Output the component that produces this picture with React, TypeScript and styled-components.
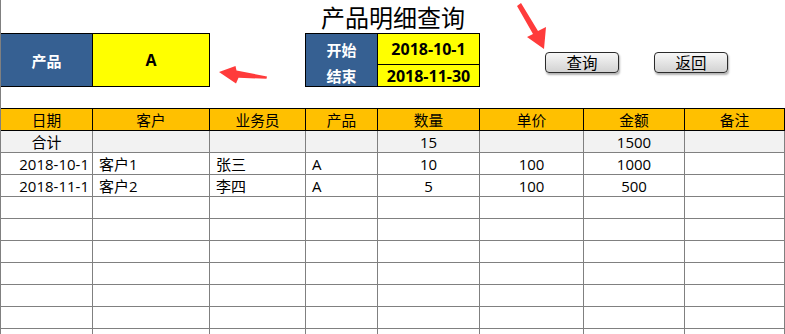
// Product Detail Query

// ___________________________________________________________________

import * as React from 'react'
import styled, { createGlobalStyle } from 'styled-components'

// ___________________________________________________________________

const colors = {
  blue: '#366092',
  yellow: '#ffff00',
  header: '#ffc000',
  total: '#f2f2f2',
  grid: '#808080',
  line: '#000000',
  arrow: '#ff3b3b'
}

const columns = '92px 117px 96px 72px 102px 104px 101px 100px'
const cjk = '"Noto Sans CJK SC", "Open Sans", sans-serif'
const mixed = '"Open Sans", "Noto Sans CJK SC", sans-serif'

type Align = 'left' | 'center' | 'right'

type RowShape = {
  date: string
  customer: string
  seller: string
  product: string
  qty: string
  price: string
  amount: string
  note: string
}

const headers = ['日期', '客户', '业务员', '产品', '数量', '单价', '金额', '备注']

const rows: RowShape[] = [
  {
    date: '2018-10-1',
    customer: '客户1',
    seller: '张三',
    product: 'A',
    qty: '10',
    price: '100',
    amount: '1000',
    note: ''
  },
  {
    date: '2018-11-1',
    customer: '客户2',
    seller: '李四',
    product: 'A',
    qty: '5',
    price: '100',
    amount: '500',
    note: ''
  }
]

const emptyRows = Array.from({ length: 8 })

// ___________________________________________________________________

const LeftArrow = () => (
  <ArrowLeftSvg width="58" height="26" viewBox="0 0 58 26">
    <polygon
      points="5,12 21.5,6 22.5,10.5 53,16.5 52.5,18.8 24.5,17.8 22,23.5"
      fill={colors.arrow}
    />
  </ArrowLeftSvg>
)

const DownArrow = () => (
  <ArrowDownSvg width="38" height="52" viewBox="0 0 38 52">
    <polygon
      points="5,6 9,3 26,31 34,27 32,49 15,37 21,34"
      fill={colors.arrow}
    />
  </ArrowDownSvg>
)

const App: React.FC = () => {
  return (
    <>
      <GlobalStyle />
      <Page>
        <Toolbar>
          <Title>产品明细查询</Title>

          <ProductBox>
            <Label>产品</Label>
            <ProductValue>A</ProductValue>
          </ProductBox>

          <DateBox>
            <Label>开始</Label>
            <DateValue divided>2018-10-1</DateValue>
            <Label>结束</Label>
            <DateValue>2018-11-30</DateValue>
          </DateBox>

          <Actions>
            <Button>查询</Button>
            <Button>返回</Button>
          </Actions>

          <LeftArrow />
          <DownArrow />
        </Toolbar>

        <Sheet>
          <HeadRow>
            {headers.map(h => (
              <HeadCell key={h}>{h}</HeadCell>
            ))}
          </HeadRow>

          <Row total>
            <Cell align="center">合计</Cell>
            <Cell />
            <Cell />
            <Cell />
            <Cell align="center">15</Cell>
            <Cell />
            <Cell align="center">1500</Cell>
            <Cell />
          </Row>

          {rows.map(r => (
            <Row key={r.date}>
              <Cell align="right">{r.date}</Cell>
              <Cell align="left">{r.customer}</Cell>
              <Cell align="left">{r.seller}</Cell>
              <Cell align="left">{r.product}</Cell>
              <Cell align="center">{r.qty}</Cell>
              <Cell align="center">{r.price}</Cell>
              <Cell align="center">{r.amount}</Cell>
              <Cell align="center">{r.note}</Cell>
            </Row>
          ))}

          {emptyRows.map((_, i) => (
            <Row key={i}>
              {headers.map(h => (
                <Cell key={h} />
              ))}
            </Row>
          ))}
        </Sheet>
      </Page>
    </>
  )
}

export default App

// ___________________________________________________________________

const GlobalStyle = createGlobalStyle`
  html, body {
    margin: 0;
    padding: 0;
    background: #ffffff;
    overflow: hidden;
  }

  * {
    box-sizing: border-box;
  }
`

const Page = styled.div`
  width: 785px;
  height: 334px;
  overflow: hidden;
  border-left: 1px solid ${colors.grid};
  font-family: ${mixed};
  color: #000;
`

const Toolbar = styled.div`
  position: relative;
  display: grid;
  grid-template-columns: ${columns};
  grid-template-rows: 33px 54px;
  padding-bottom: 21px;
`

const Title = styled.h1`
  grid-column: 4 / 6;
  grid-row: 1;
  margin: 0;
  font-family: ${cjk};
  font-size: 24px;
  font-weight: 400;
  line-height: 33px;
  text-align: center;
  white-space: nowrap;
`

const ProductBox = styled.div`
  grid-column: 1 / 3;
  grid-row: 2;
  display: grid;
  grid-template-columns: 92px 117px;
  border-top: 1px solid ${colors.line};
  border-bottom: 1px solid ${colors.line};
`

const DateBox = styled.div`
  grid-column: 4 / 6;
  grid-row: 2;
  margin-left: -1px;
  display: grid;
  grid-template-columns: 72px 102px;
  grid-template-rows: 31px 21px;
  grid-auto-flow: row;
  border: 1px solid ${colors.line};
  border-right: 0;
`

const Label = styled.div`
  display: flex;
  align-items: center;
  justify-content: center;
  background: ${colors.blue};
  border-right: 1px solid ${colors.line};
  color: #ffffff;
  font-family: ${cjk};
  font-size: 15px;
  font-weight: 700;
`

const ProductValue = styled.div`
  display: flex;
  align-items: center;
  justify-content: center;
  background: ${colors.yellow};
  border-right: 1px solid ${colors.line};
  font-size: 16px;
  font-weight: 700;
`

const DateValue = styled.div<{ divided?: boolean }>`
  display: flex;
  align-items: center;
  justify-content: center;
  background: ${colors.yellow};
  border-right: 1px solid ${colors.line};
  border-bottom: ${p => (p.divided ? `1px solid ${colors.line}` : '0')};
  font-size: 16px;
  font-weight: 700;
`

const Actions = styled.div`
  grid-column: 6 / 9;
  grid-row: 2;
  display: flex;
  align-items: flex-start;
  gap: 35px;
  padding: 19px 0 0 65px;
`

const Button = styled.button`
  width: 74px;
  height: 21px;
  padding: 0;
  border: 1px solid #2b2b2b;
  border-radius: 4px;
  background: linear-gradient(#f7f7f7, #d2d2d2);
  box-shadow: 1px 2px 2px rgba(0, 0, 0, 0.3);
  font-family: ${cjk};
  font-size: 15.5px;
  line-height: 19px;
  color: #000;
`

const ArrowLeftSvg = styled.svg`
  position: absolute;
  left: 213px;
  top: 60px;
`

const ArrowDownSvg = styled.svg`
  position: absolute;
  left: 511px;
  top: 0;
`

const Sheet = styled.div`
  display: flex;
  flex-direction: column;
`

const HeadRow = styled.div`
  display: grid;
  grid-template-columns: ${columns};
  height: 23px;
  background: ${colors.header};
  border-top: 1px solid ${colors.line};
  border-bottom: 1px solid ${colors.line};
`

const HeadCell = styled.div`
  display: flex;
  align-items: center;
  justify-content: center;
  border-right: 1px solid ${colors.line};
  font-family: ${cjk};
  font-size: 14.7px;
`

const Row = styled.div<{ total?: boolean }>`
  display: grid;
  grid-template-columns: ${columns};
  height: 22px;
  flex-shrink: 0;
  background: ${p => (p.total ? colors.total : '#ffffff')};
  border-bottom: 1px solid ${colors.grid};
`

const Cell = styled.div<{ align?: Align }>`
  display: flex;
  align-items: center;
  justify-content: ${p =>
    p.align === 'left'
      ? 'flex-start'
      : p.align === 'right'
      ? 'flex-end'
      : 'center'};
  padding: ${p =>
    p.align === 'left' ? '0 0 0 6px' : p.align === 'right' ? '0 3px 0 0' : '0'};
  border-right: 1px solid ${colors.grid};
  font-size: 15px;
  white-space: nowrap;
  overflow: hidden;
`
